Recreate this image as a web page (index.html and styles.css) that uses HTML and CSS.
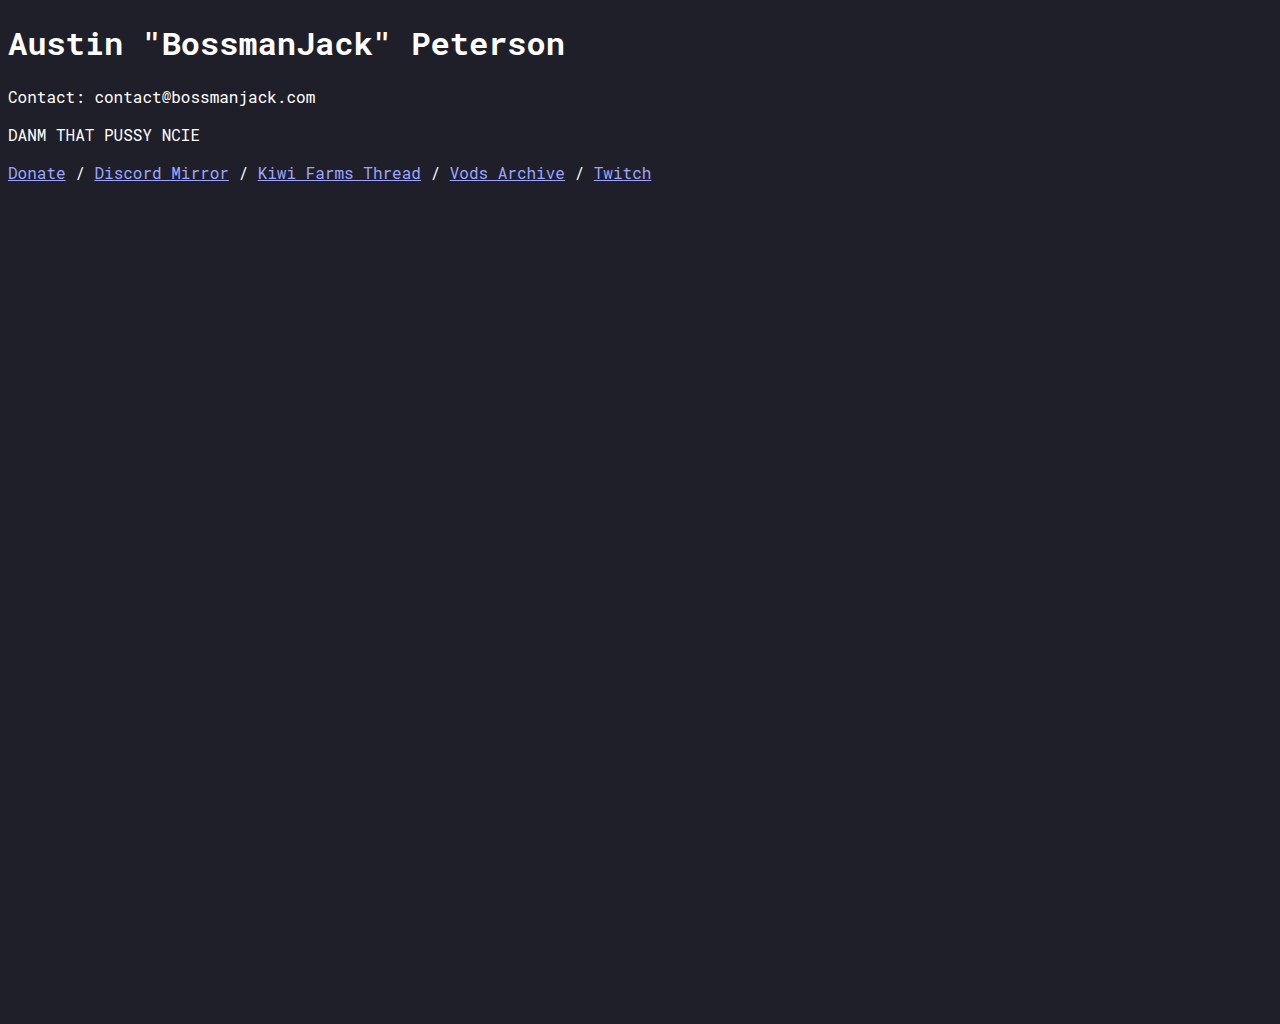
FILE: index.html
```html
<!DOCTYPE html>
<html lang="en">
<head>
<meta charset="utf-8">
<title>Austin "BossmanJack" Peterson</title>
<link rel="stylesheet" href="styles.css">
</head>
<body class="page">
<h1 class="title">Austin "BossmanJack" Peterson</h1>
<p class="line">Contact: contact@bossmanjack.com</p>
<p class="line">DANM THAT PUSSY NCIE</p>
<p class="line"><a class="link" href="#">Donate</a> / <a class="link" href="#">Discord Mirror</a> / <a class="link" href="#">Kiwi Farms Thread</a> / <a class="link" href="#">Vods Archive</a> / <a class="link" href="#">Twitch</a></p>
</body>
</html>
```
FILE: styles.css
```css
html {
  background: #1f1f29;
}
.page {
  margin: 8px;
  background: #1f1f29;
  color: #ffffff;
  font-family: "Roboto Mono", "DejaVu Sans Mono", "Liberation Mono", monospace;
  font-size: 16px;
}
.title {
  font-size: 32px;
  font-weight: 700;
  margin: 12.5px 0 21.44px;
  line-height: 43.6px;
}
.line {
  margin: 16px 0;
  line-height: 22px;
}
.link {
  color: #9da6ff;
  text-decoration: underline;
}
```
